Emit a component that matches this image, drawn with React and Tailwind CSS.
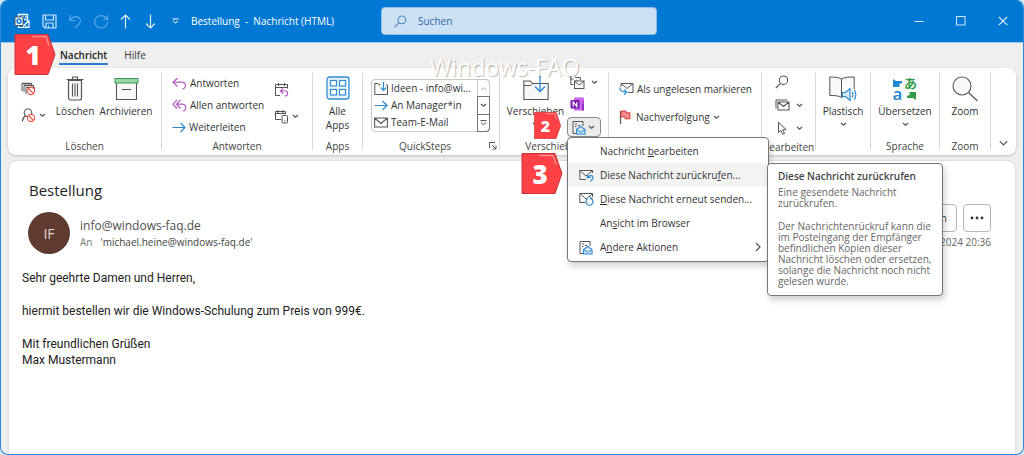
import React from "react";

/* ---------- icons ---------- */

const Icon = ({ w, h, className = "", children, vb }) => (
  <svg
    width={w}
    height={h}
    viewBox={vb || `0 0 ${w} ${h}`}
    fill="none"
    stroke="#555"
    strokeWidth="1"
    aria-hidden="true"
    className={`shrink-0 ${className}`}
  >
    {children}
  </svg>
);

const Chevron = ({ className = "" }) => (
  <Icon w={7} h={5} className={className}>
    <path d="M1 1l2.500 2.300L6 1" strokeWidth="1.200" />
  </Icon>
);

const OutlookIcon = () => (
  <Icon w={16} h={16}>
    <path d="M4.500 4V1.500h9V9" stroke="#fff" strokeWidth="1.300" />
    <path d="M7 4h2.500M11 4h1.500M10 6.500h2.500" stroke="#fff" strokeWidth="1.500" />
    <path d="M5 8.500l5 3.500 5-4v6.500H4.500V13" stroke="#fff" strokeWidth="1.200" />
    <path d="M8.500 14.500l2-2 4 2" stroke="#fff" />
    <rect x="1" y="4" width="8" height="8.500" rx="1" fill="#fff" />
    <circle cx="5" cy="8.250" r="2" stroke="#0078d4" strokeWidth="1.400" />
  </Icon>
);

const SaveIcon = () => (
  <Icon w={15} h={15}>
    <path d="M1 1h13v13H3l-2-2z" stroke="#cfe6fa" strokeWidth="1.200" />
    <path d="M3.500 1v5h8V1M4 14V9h7v5M6.500 11.500V14" stroke="#cfe6fa" strokeWidth="1.200" />
  </Icon>
);

const UndoIcon = () => (
  <Icon w={14} h={15}>
    <path d="M2 1v5.500h5.500M2 6.500C4 3.500 6.500 2.200 9 2.700c3.600.8 4.500 4.600 2 7.300l-4 4" stroke="#5ea9e6" strokeWidth="1.200" />
  </Icon>
);

const RedoIcon = () => (
  <Icon w={16} h={15}>
    <path d="M10.500 5.500h4v-4M14.200 5.300C12 1.500 8 .8 5 2.300 1.200 4.300.6 9 3.300 11.800c2.700 2.900 7.300 2.900 9.800 0C14.300 10.500 14.700 9.300 14.700 8" stroke="#5ea9e6" strokeWidth="1.200" />
  </Icon>
);

const UpIcon = () => (
  <Icon w={11} h={15}>
    <path d="M5.500 14.500V1M1 5.500L5.500 1 10 5.500" stroke="#e6f2fc" strokeWidth="1.200" />
  </Icon>
);

const DownIcon = () => (
  <Icon w={11} h={15}>
    <path d="M5.500.5V14M1 9.500L5.500 14 10 9.500" stroke="#e6f2fc" strokeWidth="1.200" />
  </Icon>
);

const CustomizeIcon = () => (
  <Icon w={7} h={6}>
    <path d="M.5 1h6" stroke="#fff" />
    <path d="M1 3l2.500 2L6 3" stroke="#fff" />
  </Icon>
);

const Magnifier = ({ size = 14, color = "#555", width = 14 }) => (
  <Icon w={size} h={size} vb="0 0 14 14">
    <circle cx="8.500" cy="5.200" r="4.200" stroke={color} strokeWidth={width / 13} />
    <path d="M5.500 8.300L.8 13" stroke={color} strokeWidth={width / 13} />
  </Icon>
);

const NoSign = ({ cx, cy }) => (
  <g stroke="#ee5a52" strokeWidth="1.200">
    <circle cx={cx} cy={cy} r="3.600" fill="#fff" />
    <path d={`M${cx - 2.500} ${cy - 2.500}l5 5`} />
  </g>
);

const IgnoreIcon = () => (
  <Icon w={15} h={14}>
    <path d="M1 9V1.500h9.500V3M3 10V3.500h9.500V6" />
    <path d="M1 1.500h9.500M3 3.500h9.500" strokeWidth="1.500" />
    <path d="M5 12V5.500h8.500V8" />
    <NoSign cx={10} cy={9} />
  </Icon>
);

const JunkIcon = () => (
  <Icon w={15} h={15}>
    <circle cx="7" cy="4.800" r="3.800" strokeWidth="1.100" />
    <path d="M4.500 7.800C2.500 9 1.500 11 1.300 13.500" strokeWidth="1.100" />
    <NoSign cx={10} cy={10} />
  </Icon>
);

const TrashIcon = () => (
  <Icon w={18} h={25}>
    <path d="M2.500 4.500h13v17.500a2 2 0 0 1-2 2h-9a2 2 0 0 1-2-2z" fill="#f8f8f8" strokeWidth="1.200" />
    <path d="M.5 3.500h17M6.500 3V1h5v2M6.500 7.500v13M9 7.500v13M11.500 7.500v13" strokeWidth="1.100" />
  </Icon>
);

const ArchiveIcon = () => (
  <Icon w={25} h={25}>
    <path d="M2.500 7v16.500h20V7" fill="#f8f8f8" strokeWidth="1.100" />
    <rect x="1" y="2.500" width="23" height="4.500" fill="#9ad7a8" stroke="#3c9a52" />
    <path d="M8 13.500h9" strokeWidth="1.200" />
  </Icon>
);

const ReplyIcon = () => (
  <Icon w={15} h={13}>
    <path d="M5.500 1L1 5.200l4.500 4.300M1.200 5.200h8.300c5.200 0 5.200 6.800.5 6.800" stroke="#b65bc4" strokeWidth="1.200" />
  </Icon>
);

const ReplyAllIcon = () => (
  <Icon w={15} h={13}>
    <path d="M5 1L1 5.200l4 4.300M8.500 1l-4 4.200 4 4.300M4.700 5.200h5.500c4.700 0 4.700 6.800.6 6.800" stroke="#b65bc4" strokeWidth="1.200" />
  </Icon>
);

const ForwardIcon = () => (
  <Icon w={14} h={11}>
    <path d="M.5 5.500h12.500M8.500 1L13 5.500 8.500 10" stroke="#2b88d0" strokeWidth="1.200" />
  </Icon>
);

const MeetingIcon = () => (
  <Icon w={15} h={15}>
    <path d="M6 13.500H1.500v-11h12V6.500M1.500 5.500h12M4.500 1v3M10.500 1v3" />
    <path d="M9.200 6.500L6.500 9l2.700 2.500M7 9h4c3.500 0 3.500 5 0 5" stroke="#b65bc4" strokeWidth="1.200" />
  </Icon>
);

const MoreReplyIcon = () => (
  <Icon w={15} h={15}>
    <path d="M7 10.500H1.500v-8h10V5M1.500 4.500h10M4 1v3M9 1v3" />
    <rect x="8" y="6.500" width="5.500" height="7.500" rx="0.800" fill="#fff" />
    <path d="M10 12h1.500" />
  </Icon>
);

const AppsIcon = () => (
  <Icon w={24} h={24}>
    <rect x="1" y="1" width="22" height="22" rx="2.500" fill="#eaf4fc" stroke="#2f8fd6" strokeWidth="1.300" />
    <g fill="#fff" stroke="#2f8fd6" strokeWidth="1.200">
      <rect x="4.500" y="4.500" width="6" height="5.500" />
      <rect x="13.500" y="4.500" width="6" height="5.500" />
      <rect x="4.500" y="13.500" width="6" height="5.500" />
      <rect x="13.500" y="13.500" width="6" height="5.500" />
    </g>
  </Icon>
);

const FolderMoveSmall = () => (
  <Icon w={14} h={13}>
    <path d="M6.500 3H5L4 1.500H.8v11h12.700V3H12" />
    <path d="M9.500 0v8M6.700 5.500l2.800 2.800 2.800-2.800" stroke="#2b88d0" strokeWidth="1.200" />
  </Icon>
);

const MailIcon = () => (
  <Icon w={14} h={11}>
    <path d="M.6 1h12.800v9H.6zM.6 1L7 6.500 13.400 1" strokeWidth="1.100" />
  </Icon>
);

const FolderMoveLarge = () => (
  <Icon w={26} h={25}>
    <path d="M.8 23.500V5h6.700l2 2.500h15.700v16z" fill="#f8f8f8" strokeWidth="1.100" />
    <path d="M.8 9.500h7l2-2" />
    <path d="M17 0v15M12 10.500l5 5 5-5" stroke="#2b88d0" strokeWidth="1.300" />
  </Icon>
);

const RulesIcon = () => (
  <Icon w={15} h={15}>
    <path d="M3.500 9.500H.8V1h3l1 1.500h5.500V5M.8 4h3" />
    <rect x="4.500" y="6" width="9.500" height="7.500" fill="#fff" />
    <path d="M4.500 6.200l4.700 3.800L14 6.200" />
  </Icon>
);

const OneNoteIcon = () => (
  <Icon w={15} h={14}>
    <rect x="4" y="0.500" width="10" height="13" rx="1" fill="#ca64ea" stroke="none" />
    <path d="M12 4h2v3h-2z" fill="#ae4bd5" stroke="none" />
    <path d="M12 7h2v6.500h-2z" fill="#9332bf" stroke="none" />
    <rect x="0.500" y="3" width="9" height="8.500" rx="1" fill="#7719aa" stroke="none" />
    <path d="M3.200 9.500V5l3.600 4.500V5" stroke="#fff" strokeWidth="1.200" />
  </Icon>
);

const ActionsIcon = () => (
  <Icon w={14} h={15}>
    <path d="M4 13.500H1v-12h10V6" />
    <path d="M3 4h2M6 5.500h2M3 6.500h1.500" />
    <path d="M4.500 9.500L8.800 6.500 13 9.500V14H4.500z" fill="#d5ebfa" stroke="#2b88d0" strokeWidth="1.100" />
    <path d="M4.500 9.700l4.300 2.600L13 9.700" stroke="#2b88d0" />
  </Icon>
);

const UnreadIcon = () => (
  <Icon w={15} h={14}>
    <path d="M2 5V1.500h12v9H9M2 1.500l6 5 6-5" />
    <path d="M.8 5.500c0 3.500 2.500 4.500 6.500 4.500M5 7.300L7.700 10 5 12.800" stroke="#2b88d0" strokeWidth="1.200" />
  </Icon>
);

const FlagIcon = () => (
  <Icon w={14} h={14}>
    <path d="M1.500 14V1" strokeWidth="1.200" />
    <path d="M2 1h5v1.800h4v6H6V7H2z" fill="#f58b8b" stroke="#dc3f3f" />
  </Icon>
);

const RelatedIcon = () => (
  <Icon w={15} h={12}>
    <path d="M1 9.500V1h11.500" />
    <path d="M3 3h11v8H3zM3 3l5.500 4.500L14 3" strokeWidth="1.100" />
  </Icon>
);

const CursorIcon = () => (
  <Icon w={10} h={14}>
    <path d="M1.500 1.200v10.500l2.500-2.300 1.700 3.800 1.800-.8-1.700-3.700h3.400z" fill="#fff" />
  </Icon>
);

const ReadAloudIcon = () => (
  <Icon w={28} h={26}>
    <path d="M12.500 3C9.500 1 4 1 .8 1v18.500c4 0 8.500 0 11.700 2zM12.500 3c3-2 8.500-2 12.700-2v12M12.500 21.500c.8-.6 1.500-1 2.500-1.200" fill="#f8f8f8" />
    <path d="M13.500 16.500h3l4.500-4v12l-4.500-4h-3z" fill="#d5ebfa" stroke="#2b88d0" strokeWidth="1.100" />
    <path d="M23 15.800c1.200 1.600 1.200 4 0 5.600M25.200 13.800c2.200 2.800 2.200 7 0 9.800" stroke="#2b88d0" strokeWidth="1.100" />
  </Icon>
);

const TranslateIcon = () => (
  <svg width="26" height="28" viewBox="0 0 26 28" aria-hidden="true" className="shrink-0 overflow-visible">
    <path d="M1 3l3 2h6v2.500H7.500V11H1z" fill="#1f86d2" />
    <path d="M24 24l-3-2h-6v-2.500h2.500V16H24z" fill="#2f9c4a" />
    <text x="0.500" y="23.500" fontSize="17" fontWeight="600" fill="#1f86d2" fontFamily="Open Sans, sans-serif">a</text>
    <text x="12" y="12" fontSize="13" fontWeight="700" fill="#2f9c4a" fontFamily="Noto Sans CJK JP, sans-serif">あ</text>
  </svg>
);

const ZoomIcon = () => (
  <Icon w={26} h={26}>
    <circle cx="10" cy="10" r="9" fill="#f8f8f8" strokeWidth="1.100" />
    <path d="M16.500 16.500l9 8.500" strokeWidth="1.200" />
  </Icon>
);

const RecallIcon = () => (
  <Icon w={15} h={13}>
    <path d="M7 10.500H.8V1.500H13.500V4M.8 1.500l6.300 5.500 6.400-5.500" />
    <path d="M8.500 5.500v3.200h3.200M8.700 8.500c2-3 5.500-2 5.300.5-.1 1.400-1.300 2-3 3.500" stroke="#2b88d0" strokeWidth="1.200" />
  </Icon>
);

const ResendIcon = () => (
  <Icon w={15} h={14}>
    <path d="M6 10.500H.8V1.500H13.500V5M.8 1.500l6.300 5.500 6.400-5.500" />
    <path d="M8.300 6.500c-2 2-1.700 5.500 1 6.500 3 1 5.200-1.700 4.500-4.300-.4-1.300-1.300-2-2.500-2.400M11.500 4.500v2.200h2.200" stroke="#2b88d0" strokeWidth="1.200" />
  </Icon>
);

/* ---------- building blocks ---------- */

const Group = ({ label, className = "", children }) => (
  <section className={`flex shrink-0 flex-col pb-px ${className}`}>
    <div className="flex flex-1">{children}</div>
    <h2 className="h-4 text-center leading-4 text-[#444]">{label}</h2>
  </section>
);

const Divider = () => <div className="my-[5px] w-px shrink-0 bg-[#d9d9d9]" />;

const IconButton = ({ label, menu, className = "", children }) => (
  <button aria-label={label} className={`flex items-center gap-1.5 ${className}`}>
    {children}
    {menu && <Chevron />}
  </button>
);

const BigButton = ({ label, menu, className = "", children }) => (
  <button className={`flex flex-col items-center pt-2 ${className}`}>
    <span className="flex h-7 items-start">{children}</span>
    <span className="whitespace-pre leading-[14px]">{label}</span>
    {menu && <Chevron className="mt-1" />}
  </button>
);

const TextButton = ({ label, menu, className = "", children }) => (
  <button className={`flex items-center gap-[3px] whitespace-nowrap ${className}`}>
    {children}
    {label}
    {menu && <Chevron />}
  </button>
);

const Badge = ({ n, className = "", size }) => (
  <div className={`pointer-events-none absolute z-40 ${className}`} aria-hidden="true">
    <svg viewBox="0 0 41 41" className="h-full w-full">
      <path d="M.5.500h33l7 20-7 20H.5z" fill="#fd4144" stroke="#c93236" />
      <path d="M18 2.500h13.500l3 9" fill="none" stroke="#ff8a8a" strokeWidth="1.500" />
    </svg>
    <span className={`absolute inset-0 flex items-center justify-center pr-1 font-['Open_Sans',sans-serif] font-extrabold leading-none text-white ${size}`}>
      {n}
    </span>
  </div>
);

const MenuItem = ({ icon, active, submenu, children }) => (
  <li role="none" className="relative">
    <button
      role="menuitem"
      className={`flex h-6 w-full items-center text-left ${active ? "bg-[#f3f3f3]" : ""}`}
    >
      <span className="flex w-8 shrink-0 justify-center pl-1">{icon}</span>
      <span className="flex-1 whitespace-nowrap">{children}</span>
      {submenu && (
        <Icon w={6} h={10} className="mr-[7px]">
          <path d="M1 1l4 4-4 4" strokeWidth="1.200" />
        </Icon>
      )}
    </button>
    {active && <Tooltip />}
  </li>
);

const Tooltip = () => (
  <div
    role="tooltip"
    className="absolute left-[199px] top-0 z-30 w-[176px] rounded-[4px] border border-[#767676] bg-white px-[10px] pb-2 pt-[6px] leading-[11px] text-[#666] shadow-[2px_4px_6px_rgba(0,0,0,0.18)]"
  >
    <p className="mb-1 whitespace-nowrap font-semibold leading-[13px] text-[#444]">Diese Nachricht zurückrufen</p>
    <p className="mb-3">
      Eine gesendete Nachricht
      <br />
      zurückrufen.
    </p>
    <p className="whitespace-nowrap">
      Der Nachrichtenrückruf kann die
      <br />
      im Posteingang der Empfänger
      <br />
      befindlichen Kopien dieser
      <br />
      Nachricht löschen oder ersetzen,
      <br />
      solange die Nachricht noch nicht
      <br />
      gelesen wurde.
    </p>
  </div>
);

const ActionsMenu = () => (
  <ul
    role="menu"
    className="absolute left-0 top-full z-30 w-[202px] rounded-[4px] border border-[#767676] bg-white pb-[2px] pt-px shadow-[2px_4px_6px_rgba(0,0,0,0.18)]"
  >
    <MenuItem>
      Nachricht <u>b</u>earbeiten
    </MenuItem>
    <MenuItem active icon={<RecallIcon />}>
      Diese Nachricht zurückru<u>f</u>en...
    </MenuItem>
    <MenuItem icon={<ResendIcon />}>
      <u>D</u>iese Nachricht erneut senden...
    </MenuItem>
    <MenuItem>
      An<u>s</u>icht im Browser
    </MenuItem>
    <MenuItem submenu icon={<ActionsIcon />}>
      A<u>n</u>dere Aktionen
    </MenuItem>
  </ul>
);

/* ---------- window parts ---------- */

const TitleBar = () => (
  <header className="flex h-[43px] items-center border-b border-[#9dc9ee] bg-[#0078d4] text-white">
    <div className="flex w-[380px] shrink-0 items-center pl-[13px]">
      <OutlookIcon />
      <div className="ml-3 flex items-center gap-[11px]">
        <button aria-label="Speichern"><SaveIcon /></button>
        <button aria-label="Rückgängig"><UndoIcon /></button>
        <button aria-label="Wiederholen"><RedoIcon /></button>
        <button aria-label="Vorheriges Element"><UpIcon /></button>
      </div>
      <button aria-label="Nächstes Element" className="ml-[14px]"><DownIcon /></button>
      <button aria-label="Symbolleiste anpassen" className="ml-4"><CustomizeIcon /></button>
      <h1 className="ml-3 whitespace-pre text-[10px]">Bestellung  -  Nachricht (HTML)</h1>
    </div>
    <label className="flex h-7 w-[276px] shrink-0 items-center rounded-[4px] border border-[#8fbde6] bg-[#cce1f3] pl-3">
      <Magnifier size={13} color="#4a86bd" width={15} />
      <input
        type="search"
        aria-label="Suchen"
        placeholder="Suchen"
        className="ml-[11px] min-w-0 flex-1 bg-transparent text-[10px] outline-none placeholder:text-[#2a6aa8]"
      />
    </label>
    <div className="ml-auto flex items-center gap-8 pr-[15px]">
      <button aria-label="Minimieren">
        <Icon w={10} h={10}><path d="M.5 5.500h9" stroke="#cfe6fa" /></Icon>
      </button>
      <button aria-label="Maximieren">
        <Icon w={10} h={10}><rect x="0.500" y="0.500" width="8.500" height="8.500" stroke="#cfe6fa" /></Icon>
      </button>
      <button aria-label="Schließen">
        <Icon w={10} h={10}><path d="M.8.800l8.400 8.400M9.200.800L.8 9.200" stroke="#e6f2fc" strokeWidth="1.100" /></Icon>
      </button>
    </div>
  </header>
);

const Tabs = () => (
  <nav className="flex h-[25px] pl-[58px] pt-[5px] text-[#333]">
    <a href="#nachricht" className="flex h-[17px] items-center border-b-2 border-[#2b7cd3] px-px font-semibold text-[#222]">
      Nachricht
    </a>
    <a href="#hilfe" className="ml-4 flex h-[15px] items-center">
      Hilfe
    </a>
  </nav>
);

const QuickSteps = () => (
  <div className="ml-2 mt-[11px] flex h-[53px] w-[119px] rounded-[4px] border border-[#c8c8c8]">
    <ul className="flex-1 pl-[2px]">
      {[
        ["Ideen - info@wi...", <FolderMoveSmall />],
        ["An Manager*in", <ForwardIcon />],
        ["Team-E-Mail", <MailIcon />],
      ].map(([text, icon]) => (
        <li key={text}>
          <button className="flex h-[17px] items-center gap-[3px] whitespace-nowrap leading-[17px]">
            {icon}
            {text}
          </button>
        </li>
      ))}
    </ul>
    <div className="-my-px -mr-px flex w-[13px] shrink-0 flex-col">
      <button aria-label="Nach oben" className="flex flex-1 items-center justify-center rounded-tr-[4px] border border-b-0 border-[#c8c8c8]">
        <Icon w={7} h={5}><path d="M1 4l2.500-2.300L6 4" stroke="#aaa" /></Icon>
      </button>
      <button aria-label="Nach unten" className="flex flex-1 items-center justify-center border border-[#767676]">
        <Chevron />
      </button>
      <button aria-label="Weitere" className="flex flex-1 items-center justify-center rounded-br-[4px] border border-t-0 border-[#767676]">
        <Icon w={7} h={6}><path d="M.5.500h6M1 2.500l2.500 2.300L6 2.500" /></Icon>
      </button>
    </div>
  </div>
);

const Ribbon = () => (
  <div className="relative z-20 mx-[7px] flex h-[87px] rounded-lg bg-white text-[#333] shadow-[0_1px_3px_rgba(0,0,0,0.2)]">
    <Group label="Löschen" className="w-[153px]">
      <div className="flex w-[47px] flex-col gap-3 pl-[13px] pt-[14px]">
        <IconButton label="Ignorieren"><IgnoreIcon /></IconButton>
        <IconButton label="Junk-E-Mail" menu className="gap-[3px]"><JunkIcon /></IconButton>
      </div>
      <BigButton label="Löschen" className="w-10"><TrashIcon /></BigButton>
      <BigButton label="Archivieren" className="ml-[2px] w-[58px]"><ArchiveIcon /></BigButton>
    </Group>
    <Divider />
    <Group label="Antworten" className="w-[150px]">
      <div className="flex flex-1 flex-col pl-[10px] pt-1">
        <TextButton label="Antworten" className="h-[22px]"><ReplyIcon /></TextButton>
        <TextButton label="Allen antworten" className="h-[22px]"><ReplyAllIcon /></TextButton>
        <TextButton label="Weiterleiten" className="h-[22px]"><ForwardIcon /></TextButton>
      </div>
      <div className="flex w-[38px] flex-col gap-3 pt-[14px]">
        <IconButton label="Besprechung"><MeetingIcon /></IconButton>
        <IconButton label="Weitere Antworten" menu className="gap-[3px]"><MoreReplyIcon /></IconButton>
      </div>
    </Group>
    <Divider />
    <Group label="Apps" className="w-[49px]">
      <BigButton label={"Alle\nApps"} className="w-full"><AppsIcon /></BigButton>
    </Group>
    <Divider />
    <Group
      label={
        <span className="flex items-center justify-between pl-9 pr-[2px]">
          QuickSteps
          <button aria-label="QuickSteps verwalten">
            <Icon w={8} h={8}>
              <path d="M.5 6V.500H6M3 3l4 4M7 3.500V7H3.500" />
            </Icon>
          </button>
        </span>
      }
      className="w-[136px]"
    >
      <QuickSteps />
    </Group>
    <Divider />
    <Group label="Verschieben" className="w-[108px]">
      <BigButton label="Verschieben" menu className="ml-1 w-[63px]"><FolderMoveLarge /></BigButton>
      <div className="flex flex-col items-start pt-[3px]">
        <IconButton label="Regeln" menu className="h-[22px] pl-[3px]"><RulesIcon /></IconButton>
        <IconButton label="OneNote" className="h-[22px] pl-[3px]"><OneNoteIcon /></IconButton>
        <div className="relative mt-[2px]">
          <button
            aria-label="Aktionen"
            aria-expanded="true"
            className="flex h-5 w-[34px] items-center justify-between rounded-[4px] border border-[#8a8a8a] bg-[#ebebeb] pl-1 pr-[5px]"
          >
            <ActionsIcon />
            <Chevron />
          </button>
          <ActionsMenu />
          <Badge n="2" className="-top-[5px] right-full mr-[6px] h-[27px] w-[27px]" size="text-[16px]" />
          <Badge n="3" className="right-full top-[36px] mr-1 h-[41px] w-[42px]" size="text-[26px]" />
        </div>
      </div>
    </Group>
    <Divider />
    <Group className="w-[152px]">
      <div className="flex flex-col gap-[6px] pl-[10px] pt-[10px]">
        <TextButton label="Als ungelesen markieren" className="h-[22px]"><UnreadIcon /></TextButton>
        <TextButton label="Nachverfolgung" menu className="h-[22px]"><FlagIcon /></TextButton>
      </div>
    </Group>
    <Divider />
    <Group label="Bearbeiten" className="w-[53px]">
      <div className="flex flex-col items-start pl-[13px] pt-[3px]">
        <IconButton label="Suchen" className="h-[22px]"><Magnifier /></IconButton>
        <IconButton label="Verwandt" menu className="h-6"><RelatedIcon /></IconButton>
        <IconButton label="Markieren" menu className="h-[22px] gap-[9px] pl-[2px]"><CursorIcon /></IconButton>
      </div>
    </Group>
    <Divider />
    <Group className="w-[54px]">
      <BigButton label="Plastisch" menu className="w-full"><ReadAloudIcon /></BigButton>
    </Group>
    <Divider />
    <Group label="Sprache" className="w-[68px]">
      <BigButton label="Übersetzen" menu className="w-full"><TranslateIcon /></BigButton>
    </Group>
    <Divider />
    <Group label="Zoom" className="w-[50px]">
      <BigButton label="Zoom" className="w-full"><ZoomIcon /></BigButton>
    </Group>
    <Divider />
    <button aria-label="Menüband reduzieren" className="ml-auto flex items-end pb-2 pr-2">
      <Icon w={9} h={7}><path d="M.8 1.200l3.700 3.800 3.700-3.800" strokeWidth="1.200" /></Icon>
    </button>
  </div>
);

const Message = () => (
  <main className="mx-2 mt-[6px] flex-1 rounded-t-lg bg-white shadow-[0_0_2px_rgba(0,0,0,0.25)]">
    <h2 className="pl-5 pt-[19px] text-[15px] leading-5 text-[#222]">Bestellung</h2>
    <div className="mt-3 flex items-start pl-[19px]">
      <div className="flex size-[42px] shrink-0 items-center justify-center rounded-full bg-[#5f3b2f] text-[14px] text-[#e3d8d4]">
        IF
      </div>
      <div className="ml-[10px] pt-[6px] text-[#444]">
        <p className="text-[12px] leading-4 text-[#505050]">info@windows-faq.de</p>
        <p className="flex gap-2 leading-4">
          <span className="text-[#777]">An</span>
          <span>'michael.heine@windows-faq.de'</span>
        </p>
      </div>
      <div className="-mt-2 ml-auto flex flex-col items-end gap-[3px] pr-6">
        <div className="flex gap-[6px]">
          <button className="h-7 rounded-[4px] border border-[#b5b5b5] px-[9px] text-[#333]">Weiterleiten</button>
          <button aria-label="Weitere Aktionen" className="flex h-7 w-7 items-center justify-center rounded-[4px] border border-[#b5b5b5]">
            <Icon w={14} h={4}>
              <g fill="#333" stroke="none">
                <circle cx="2" cy="2" r="1.400" />
                <circle cx="7" cy="2" r="1.400" />
                <circle cx="12" cy="2" r="1.400" />
              </g>
            </Icon>
          </button>
        </div>
        <p className="leading-[14px] text-[#666]">.2024 20:36</p>
      </div>
    </div>
    <div className="mt-4 space-y-[17px] pl-[13px] font-['Roboto',sans-serif] text-[12px] leading-4 text-[#222]">
      <p>Sehr geehrte Damen und Herren,</p>
      <p>hiermit bestellen wir die Windows-Schulung zum Preis von 999€.</p>
      <p>
        Mit freundlichen Grüßen
        <br />
        Max Mustermann
      </p>
    </div>
  </main>
);

export default function App() {
  return (
    <div className="flex min-h-screen flex-col bg-[#d6e4ef] font-['Open_Sans',sans-serif] text-[10px]">
      <div className="relative flex flex-1 flex-col overflow-hidden rounded-[8px] border border-t-0 border-[#2b8bd9] bg-[#efefef]">
        <TitleBar />
        <Tabs />
        <Ribbon />
        <Message />
        <Badge n="1" className="left-[13px] top-[34px] h-[41px] w-[42px]" size="text-[26px]" />
        <p className="pointer-events-none absolute left-[429px] top-[51px] z-20 whitespace-nowrap text-[23px] leading-8 text-white [text-shadow:1px_1px_1px_rgba(0,0,0,0.28)]">
          Windows-FAQ
        </p>
      </div>
    </div>
  );
}
